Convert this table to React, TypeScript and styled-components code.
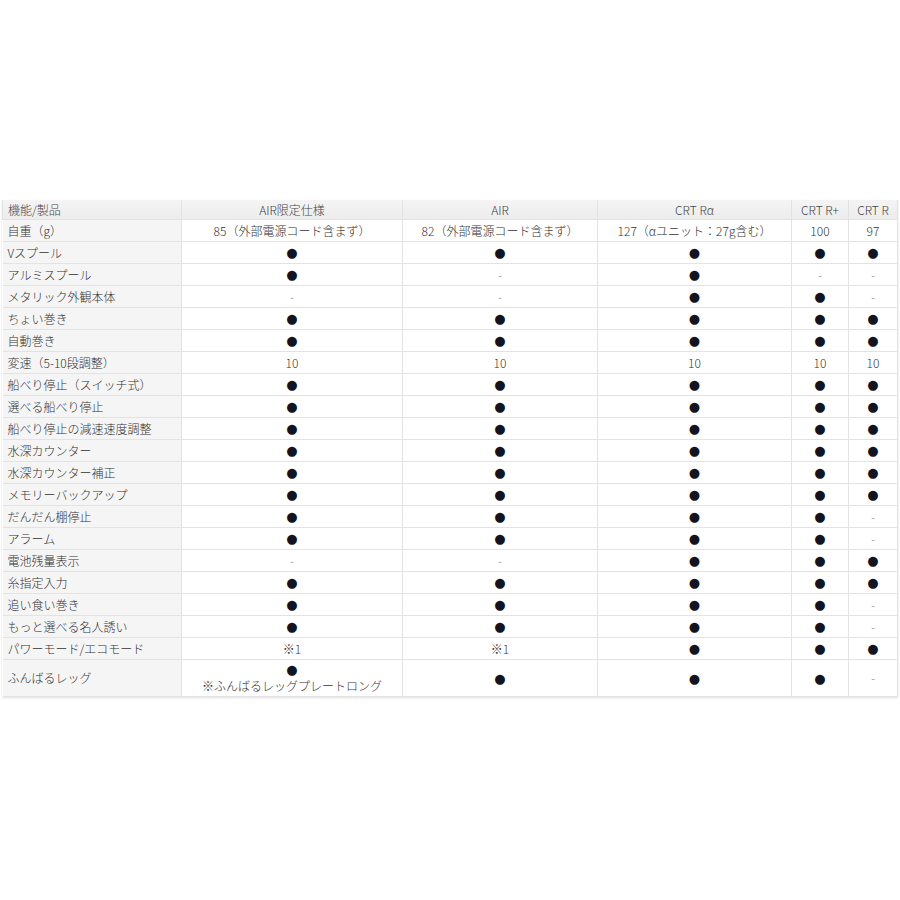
import styled, { createGlobalStyle } from "styled-components";

const GlobalStyle = createGlobalStyle`
  html, body {
    margin: 0;
    padding: 0;
    background: #ffffff;
  }
  body {
    font-family: "Noto Sans CJK JP", "Noto Sans", sans-serif;
    color: #333;
  }
`;

type Cell = string;

const DOT = "●";

const columns = [
  { label: "機能/製品", width: 179 },
  { label: "AIR限定仕様", width: 221 },
  { label: "AIR", width: 195 },
  { label: "CRT Rα", width: 194 },
  { label: "CRT R+", width: 57 },
  { label: "CRT R", width: 49 },
];

const rows: { name: string; cells: Cell[] }[] = [
  { name: "自重（g）", cells: ["85（外部電源コード含まず）", "82（外部電源コード含まず）", "127（αユニット：27g含む）", "100", "97"] },
  { name: "Vスプール", cells: [DOT, DOT, DOT, DOT, DOT] },
  { name: "アルミスプール", cells: [DOT, "-", DOT, "-", "-"] },
  { name: "メタリック外観本体", cells: ["-", "-", DOT, DOT, "-"] },
  { name: "ちょい巻き", cells: [DOT, DOT, DOT, DOT, DOT] },
  { name: "自動巻き", cells: [DOT, DOT, DOT, DOT, DOT] },
  { name: "変速（5-10段調整）", cells: ["10", "10", "10", "10", "10"] },
  { name: "船べり停止（スイッチ式）", cells: [DOT, DOT, DOT, DOT, DOT] },
  { name: "選べる船べり停止", cells: [DOT, DOT, DOT, DOT, DOT] },
  { name: "船べり停止の減速速度調整", cells: [DOT, DOT, DOT, DOT, DOT] },
  { name: "水深カウンター", cells: [DOT, DOT, DOT, DOT, DOT] },
  { name: "水深カウンター補正", cells: [DOT, DOT, DOT, DOT, DOT] },
  { name: "メモリーバックアップ", cells: [DOT, DOT, DOT, DOT, DOT] },
  { name: "だんだん棚停止", cells: [DOT, DOT, DOT, DOT, "-"] },
  { name: "アラーム", cells: [DOT, DOT, DOT, DOT, "-"] },
  { name: "電池残量表示", cells: ["-", "-", DOT, DOT, DOT] },
  { name: "糸指定入力", cells: [DOT, DOT, DOT, DOT, DOT] },
  { name: "追い食い巻き", cells: [DOT, DOT, DOT, DOT, "-"] },
  { name: "もっと選べる名人誘い", cells: [DOT, DOT, DOT, DOT, "-"] },
  { name: "パワーモード/エコモード", cells: ["※1", "※1", DOT, DOT, DOT] },
];

function Value({ v }: { v: string }) {
  if (v === DOT) return <Dot>{DOT}</Dot>;
  if (v === "-") return <Dash>-</Dash>;
  return <>{v}</>;
}

export default function App() {
  return (
    <>
      <GlobalStyle />
      <Page>
        <Table>
          <colgroup>
            {columns.map((c) => (
              <col key={c.label} style={{ width: c.width }} />
            ))}
          </colgroup>
          <thead>
            <tr>
              {columns.map((c, i) => (
                <HeadCell key={c.label} $first={i === 0}>
                  {c.label}
                </HeadCell>
              ))}
            </tr>
          </thead>
          <tbody>
            {rows.map((r) => (
              <Row key={r.name}>
                <NameCell>{r.name}</NameCell>
                {r.cells.map((v, i) => (
                  <ValueCell key={i}>
                    <Value v={v} />
                  </ValueCell>
                ))}
              </Row>
            ))}
            <TallRow>
              <NameCell>ふんばるレッグ</NameCell>
              <ValueCell>
                <Stack>
                  <Dot>{DOT}</Dot>
                  <Note>※ふんばるレッグプレートロング</Note>
                </Stack>
              </ValueCell>
              <ValueCell>
                <Dot>{DOT}</Dot>
              </ValueCell>
              <ValueCell>
                <Dot>{DOT}</Dot>
              </ValueCell>
              <ValueCell>
                <Dot>{DOT}</Dot>
              </ValueCell>
              <ValueCell>
                <Dash>-</Dash>
              </ValueCell>
            </TallRow>
          </tbody>
        </Table>
      </Page>
    </>
  );
}

const Page = styled.div`
  width: 900px;
  height: 900px;
  padding: 200px 0 0 2px;
  box-sizing: border-box;
`;

const Table = styled.table`
  width: 895px;
  table-layout: fixed;
  border-collapse: collapse;
  font-size: 12px;
  font-weight: 300;
  color: #333;
  box-shadow: 0 1px 2px rgba(0, 0, 0, 0.12);
`;

const HeadCell = styled.th<{ $first?: boolean }>`
  height: 19px;
  padding: 0 5px;
  font-weight: 300;
  color: #444;
  text-align: ${(p) => (p.$first ? "left" : "center")};
  white-space: nowrap;
  background: linear-gradient(to bottom, #f4f4f4, #ececec);
  border: 1px solid #e2e2e2;
  border-top: none;
  line-height: 19px;
`;

const Row = styled.tr`
  height: 22px;
`;

const TallRow = styled.tr`
  height: 37px;
`;

const NameCell = styled.td`
  padding: 0 5px;
  text-align: left;
  white-space: nowrap;
  background: #f5f5f5;
  border: 1px solid #e3e3e3;
  border-left: none;
  line-height: 20px;
`;

const ValueCell = styled.td`
  padding: 0 2px;
  text-align: center;
  white-space: nowrap;
  background: #ffffff;
  border: 1px solid #e3e3e3;
  line-height: 20px;
`;

const Dot = styled.span`
  color: #14141e;
  font-size: 13px;
  font-weight: 400;
  font-family: "DejaVu Sans", sans-serif;
`;

const Dash = styled.span`
  color: #777;
  font-size: 11px;
`;

const Stack = styled.div`
  display: flex;
  flex-direction: column;
  align-items: center;
  line-height: 16px;
`;

const Note = styled.span`
  color: #333;
`;
